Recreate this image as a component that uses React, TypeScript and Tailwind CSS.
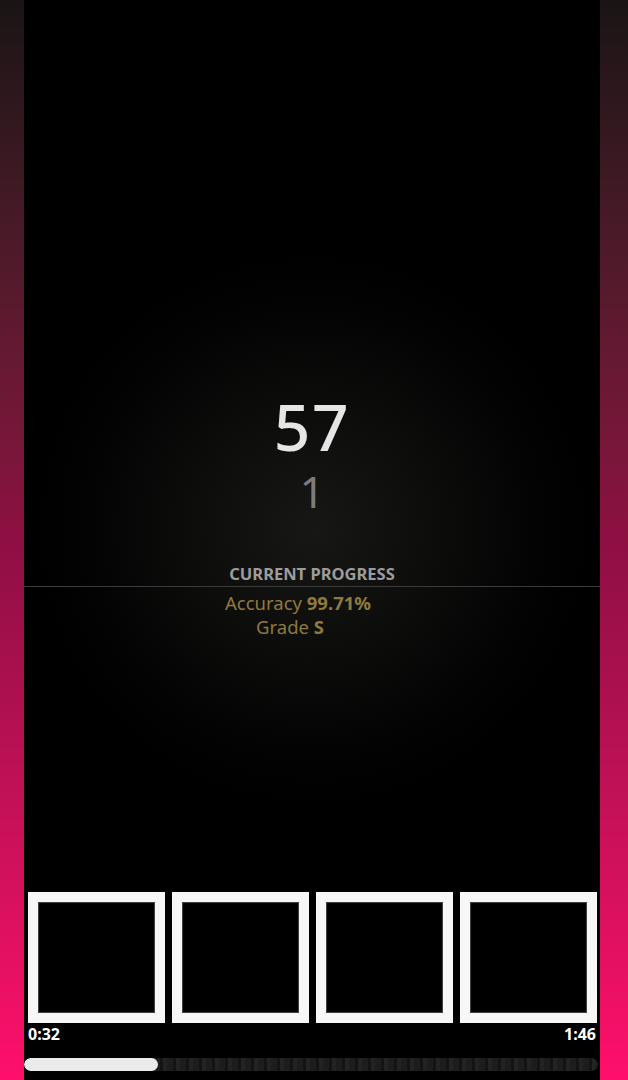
const Tile = () => (
  <div className="h-[131px] border-[10px] border-[#f7f7f7] bg-black shadow-[inset_0_0_1px_1px_rgba(140,140,140,0.5)]" />
);

export default function App() {
  return (
    <div
      className="flex h-[1080px] w-[628px] overflow-hidden bg-black"
      style={{ fontFamily: '"Noto Sans", "Open Sans", sans-serif' }}
    >
      <div className="w-[24px] bg-gradient-to-b from-[#1a1415] via-[#8e0f42] to-[#ff0f6b]" />
      <div className="relative flex w-[576px] flex-col bg-[radial-gradient(circle_280px_at_50%_49%,#171716_0%,#0c0c0b_45%,#030303_80%,#000000_100%)]">
        <div className="flex flex-col items-center pt-[395px]">
          <div className="text-[64px] font-medium leading-[64px] tracking-wide text-[#e6e6e6]">57</div>
          <div className="mt-[10px] text-[44px] leading-[44px] text-[#7c7c7c]">1</div>
          <div className="mt-[50px] text-[16.5px] font-bold leading-[22px] text-[#9c9c9c]">
            CURRENT PROGRESS
          </div>
        </div>
        <div className="mt-[1px] h-px w-full bg-[#3c3c3c]" />
        <div className="mt-[4px] flex flex-col items-center text-[18.5px] leading-[24px] text-[#8f7a3c]">
          <div className="-ml-[28px]">
            Accuracy <span className="font-bold">99.71%</span>
          </div>
          <div className="-ml-[44px]">
            Grade <span className="font-bold">S</span>
          </div>
        </div>
        <div className="mt-auto grid grid-cols-4 gap-[7px] pl-[4px] pr-[3px]">
          <Tile />
          <Tile />
          <Tile />
          <Tile />
        </div>
        <div className="flex justify-between px-[4px] pt-[1px] text-[16px] font-bold leading-[20px] text-white">
          <span>0:32</span>
          <span>1:46</span>
        </div>
        <div className="mb-[9px] mt-[14px] h-[13px] w-[574px] overflow-hidden rounded-full bg-[repeating-linear-gradient(90deg,#1d1d1d_0px,#1d1d1d_6px,#141414_6px,#141414_9px,#232323_9px,#232323_13px)]">
          <div className="h-full w-[134px] rounded-full bg-[#ebebeb]" />
        </div>
      </div>
      <div className="w-[28px] bg-gradient-to-b from-[#1a1415] via-[#8e0f42] to-[#ff0f6b]" />
    </div>
  );
}
